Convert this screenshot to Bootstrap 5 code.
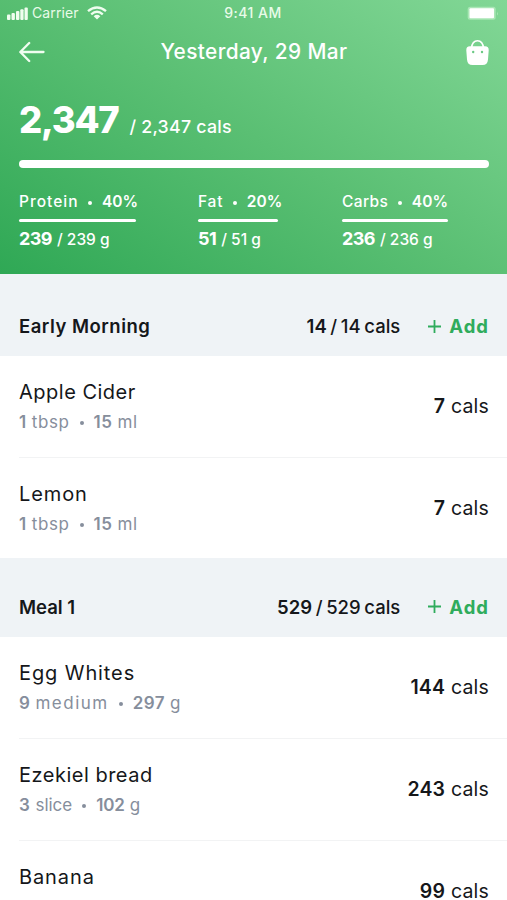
<!DOCTYPE html>
<html lang="en">
<head>
<meta charset="utf-8">
<meta name="viewport" content="width=device-width, initial-scale=1">
<title>Food diary</title>
<link href="https://cdn.jsdelivr.net/npm/bootstrap@5.3.0/dist/css/bootstrap.min.css" rel="stylesheet">
<style>
body{font-family:Inter,"Open Sans",sans-serif;color:#15171a;background:#fff;height:900px;overflow:hidden;line-height:1;white-space:nowrap}
b{font-weight:600}
svg{display:block}
.hero{height:274px;color:#fff;background:linear-gradient(32deg,#2fa855 0%,#5abf73 50%,#82d796 100%)}
.status-row{height:26px;font-size:14px;font-weight:500;color:#e9fbe9;padding:0 8px 0 7px}
.carrier{letter-spacing:.1px;font-weight:400}
.clock{letter-spacing:.5px}
.title-row{height:52px;padding:0 18px 0 19px}
.side{flex:1 1 0}
.day{font-size:20.8px;font-weight:500;letter-spacing:.4px}
.total{padding:24px 0 0 19px;height:82px}
.total-now{font-size:36.5px;font-weight:800;letter-spacing:-1.3px}
.total-goal{font-size:17.8px;font-weight:500;margin-left:11px;letter-spacing:.24px}
.total-bar{height:8px;margin:0 18px 0 19px}
.macros{padding:22px 0 0 19px;font-size:15.5px;font-weight:500}
.macro-name,.macro-value{height:22px;line-height:22px}
.macro-name{padding-top:1px}
.macro-value{margin-top:6px}
.macro-value b{font-size:18px;font-weight:700;letter-spacing:-.6px;margin-right:1px}
.macro-line{height:3px;margin-top:7px}
.c1{width:179px}.c2{width:144px}.c3{width:140px}
.c1 .macro-line{width:117px}.c2 .macro-line{width:80px}.c3 .macro-line{width:106px}
.c1 .word{letter-spacing:1px}.c2 .word{letter-spacing:.8px}.c3 .word{letter-spacing:.4px}
.dotsep{width:4px;height:4px;border-radius:50%;background:currentColor;display:inline-block;vertical-align:middle;margin:0 10px 0 9.5px}
.meal-head{background:#eff3f6;height:82px;padding:22px 19px 0;font-size:18.5px;font-weight:500}
.meal-head.later{height:79px;padding-top:19px}
.meal-head h2{font-size:18.5px;font-weight:600}
.meal-head h2.wide{letter-spacing:.5px}
.meal-cals{word-spacing:-1.3px}
.add{color:#2fac5c;font-weight:700;margin-left:28px;gap:8px}
.add span{letter-spacing:1px;margin-right:-1px}
.food{height:101.8px;padding-right:18px;margin-left:19px;border-bottom:1.4px solid #f2f3f4;font-size:19.5px;font-weight:400}
.food.end{height:100.2px;border-color:transparent}
.food-name{padding-top:25px;font-size:20px;line-height:23px;letter-spacing:.5px}
.food-name.wider{letter-spacing:.9px}
.food-info{font-size:17px;line-height:20px;margin-top:8px;color:#868e9c;letter-spacing:.4px}
.food-info b{font-weight:600}
.food-info .word{letter-spacing:.6px}
.food-info .word.wider{letter-spacing:1.5px}
.food-info .word.tight{letter-spacing:0}
.food-info .word.tight ~ b{letter-spacing:-.2px}
.food-info .dotsep{width:4px;height:4px;margin:0 10px}
.food-cals{padding-top:39px;line-height:23px;letter-spacing:.2px}
</style>
</head>
<body>
<header class="hero">
  <div class="status-row d-flex align-items-center">
    <div class="side d-flex align-items-center">
      <svg width="21" height="13" viewBox="0 0 21 13" fill="#effdef"><rect y="7.500" width="3.400" height="5.500" rx="1"/><rect x="4.500" y="6" width="3.400" height="7" rx="1"/><rect x="9" y="4" width="3.400" height="9" rx="1"/><rect x="13.300" y="2.300" width="3.300" height="10.700" rx="1"/><rect x="17.500" y=".5" width="3.300" height="12.500" rx="1"/></svg>
      <span class="carrier ms-1">Carrier</span>
      <svg class="ms-2" width="20" height="14" viewBox="0 0 20 14" fill="none" stroke="#effdef" stroke-width="2.400"><path d="M1 5.200Q10-2.400 19 5.200M4.200 8.300Q10 3.400 15.800 8.300"/><path d="M6.700 10.200Q10 7.400 13.300 10.200L10 13.500Z" fill="#effdef" stroke="none"/></svg>
    </div>
    <span class="clock">9:41 AM</span>
    <div class="side d-flex justify-content-end">
      <svg width="32" height="15" viewBox="0 0 32 15"><rect x=".7" y=".7" width="28" height="13" rx="2.500" fill="#a9e6b5"/><rect x="2.500" y="2.200" width="24.500" height="10" rx="1" fill="#fff"/><path d="M30 5.500q1.700 2 0 4z" fill="#a9e6b5"/></svg>
    </div>
  </div>
  <div class="title-row d-flex align-items-center">
    <div class="side"><svg width="27" height="22" viewBox="0 0 27 22" fill="none" stroke="#f0fdf0" stroke-width="2.300" stroke-linecap="round" stroke-linejoin="round"><path d="M24.500 11H1.500M10.200 2L1.300 11l8.900 9"/></svg></div>
    <span class="day">Yesterday, 29 Mar</span>
    <div class="side d-flex justify-content-end"><svg width="23" height="27" viewBox="0 0 23 27"><path d="M5.500 9C6 4.200 8.500 1.700 11.500 1.700S17 4.200 17.500 9" fill="none" stroke="#fff" stroke-width="1.600"/><path d="M4 7.300h15q3.900 0 3.700 4L22 20.500q-.4 5.500-5.500 5.500h-10Q1.400 26 1 20.500L.3 11.300Q.1 7.300 4 7.300z" fill="#fff"/><circle cx="7.200" cy="13" r="1.200" fill="#6bc984"/><circle cx="16" cy="13" r="1.200" fill="#6bc984"/></svg></div>
  </div>
  <div class="total d-flex align-items-baseline"><span class="total-now">2,347</span><span class="total-goal">/ 2,347 cals</span></div>
  <div class="total-bar rounded-pill bg-white"></div>
  <div class="macros d-flex">
    <div class="c1"><div class="macro-name"><span class="word">Protein</span><i class="dotsep"></i><b>40%</b></div><div class="macro-line rounded-pill bg-white"></div><div class="macro-value"><b>239</b> / 239 g</div></div>
    <div class="c2"><div class="macro-name"><span class="word">Fat</span><i class="dotsep"></i><b>20%</b></div><div class="macro-line rounded-pill bg-white"></div><div class="macro-value"><b>51</b> / 51 g</div></div>
    <div class="c3"><div class="macro-name"><span class="word">Carbs</span><i class="dotsep"></i><b>40%</b></div><div class="macro-line rounded-pill bg-white"></div><div class="macro-value"><b>236</b> / 236 g</div></div>
  </div>
</header>
<main>
  <section>
    <div class="meal-head d-flex align-items-center"><h2 class="wide m-0 me-auto">Early Morning</h2><span class="meal-cals"><b>14</b> / 14 cals</span>
      <span class="add d-flex align-items-center"><svg width="13" height="13" viewBox="0 0 13 13" stroke="#2fac5c" stroke-width="1.800"><path d="M6.500 0v13M0 6.500h13"/></svg><span>Add</span></span></div>
    <div class="food d-flex justify-content-between"><div><div class="food-name">Apple Cider</div><div class="food-info"><b>1</b> <span class="word">tbsp</span><i class="dotsep"></i><b>15</b> <span class="word">ml</span></div></div><div class="food-cals"><b>7</b> cals</div></div>
    <div class="food end d-flex justify-content-between"><div><div class="food-name wider">Lemon</div><div class="food-info"><b>1</b> <span class="word">tbsp</span><i class="dotsep"></i><b>15</b> <span class="word">ml</span></div></div><div class="food-cals"><b>7</b> cals</div></div>
  </section>
  <section>
    <div class="meal-head later d-flex align-items-center"><h2 class="m-0 me-auto">Meal 1</h2><span class="meal-cals"><b>529</b> / 529 cals</span>
      <span class="add d-flex align-items-center"><svg width="13" height="13" viewBox="0 0 13 13" stroke="#2fac5c" stroke-width="1.800"><path d="M6.500 0v13M0 6.500h13"/></svg><span>Add</span></span></div>
    <div class="food d-flex justify-content-between"><div><div class="food-name wider">Egg Whites</div><div class="food-info"><b>9</b> <span class="word wider">medium</span><i class="dotsep"></i><b>297</b> g</div></div><div class="food-cals"><b>144</b> cals</div></div>
    <div class="food d-flex justify-content-between"><div><div class="food-name">Ezekiel bread</div><div class="food-info"><b>3</b> <span class="word tight">slice</span><i class="dotsep"></i><b>102</b> g</div></div><div class="food-cals"><b>243</b> cals</div></div>
    <div class="food d-flex justify-content-between"><div class="food-name wider">Banana</div><div class="food-cals"><b>99</b> cals</div></div>
  </section>
</main>
<script src="https://cdn.jsdelivr.net/npm/bootstrap@5.3.0/dist/js/bootstrap.bundle.min.js"></script>
</body>
</html>
